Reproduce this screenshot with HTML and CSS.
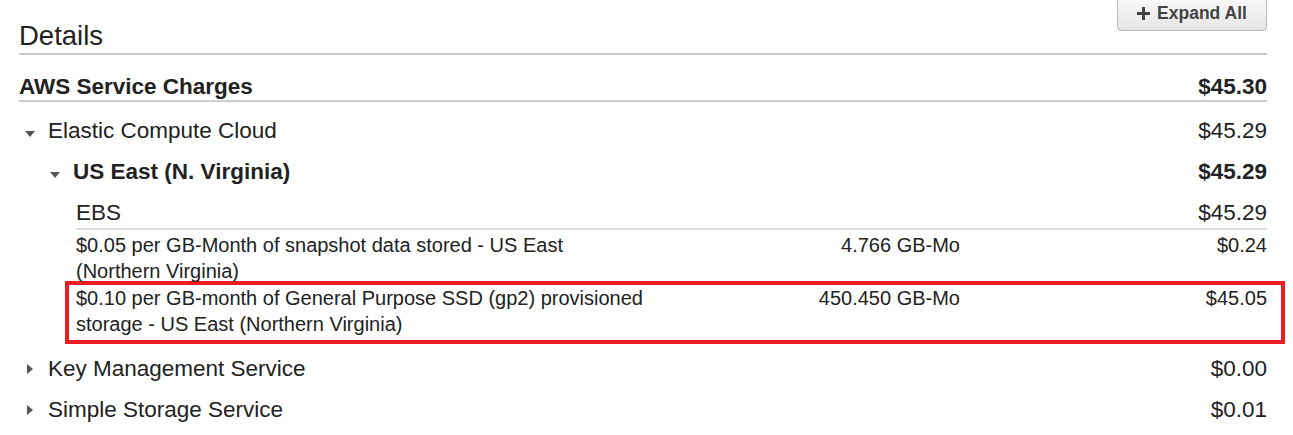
FILE: index.html
```html
<!DOCTYPE html>
<html>
<head>
<meta charset="utf-8">
<link rel="stylesheet" href="styles.css">
</head>
<body>
<div class="page">
  <div class="header">
    <h2 class="title">Details</h2>
    <button class="btn">
      <svg class="plus" width="13" height="13" viewBox="0 0 13 13"><path d="M5 0h3v5h5v3H8v5H5V8H0V5h5z" fill="#444"/></svg>
      <span>Expand All</span>
    </button>
  </div>
  <div class="section-head">
    <span>AWS Service Charges</span>
    <span>$45.30</span>
  </div>
  <div class="group">
    <div class="row lvl1">
      <span class="slot"><span class="caret down"></span></span>
      <span class="name">Elastic Compute Cloud</span>
      <span class="amt">$45.29</span>
    </div>
    <div class="row lvl2 bold">
      <span class="slot"><span class="caret down"></span></span>
      <span class="name">US East (N. Virginia)</span>
      <span class="amt">$45.29</span>
    </div>
    <div class="row lvl3 ebs">
      <span class="name">EBS</span>
      <span class="amt">$45.29</span>
    </div>
    <div class="item">
      <div class="desc">$0.05 per GB-Month of snapshot data stored - US East (Northern Virginia)</div>
      <div class="qty">4.766 GB-Mo</div>
      <div class="iamt">$0.24</div>
    </div>
    <div class="item highlight">
      <div class="desc">$0.10 per GB-month of General Purpose SSD (gp2) provisioned storage - US East (Northern Virginia)</div>
      <div class="qty">450.450 GB-Mo</div>
      <div class="iamt">$45.05</div>
    </div>
    <div class="row lvl1 after-box">
      <span class="slot"><span class="caret right"></span></span>
      <span class="name">Key Management Service</span>
      <span class="amt">$0.00</span>
    </div>
    <div class="row lvl1">
      <span class="slot"><span class="caret right"></span></span>
      <span class="name">Simple Storage Service</span>
      <span class="amt">$0.01</span>
    </div>
  </div>
</div>
</body>
</html>
```

FILE: styles.css
```css
html, body {
  margin: 0;
  padding: 0;
  background: #fff;
}
body {
  font-family: "Liberation Sans", Arial, sans-serif;
  color: #222;
}
.page {
  padding: 0 26px 0 19px;
}
.header {
  display: flex;
  justify-content: space-between;
  align-items: flex-start;
  border-bottom: 2px solid #ccc;
}
.title {
  margin: 20px 0 0 0;
  padding-bottom: 1px;
  font-size: 27.5px;
  line-height: 32px;
  font-weight: normal;
  color: #222;
}
.btn {
  margin-top: -4px;
  width: 150px;
  height: 35px;
  padding: 0;
  display: flex;
  align-items: center;
  justify-content: center;
  gap: 7px;
  border: 1px solid #b8b8b8;
  border-radius: 4px;
  background: linear-gradient(#fbfbfb, #e4e4e4);
  font-family: "Liberation Sans", Arial, sans-serif;
  font-weight: bold;
  font-size: 17.5px;
  color: #444;
}
.plus {
  display: block;
}
.section-head {
  display: flex;
  justify-content: space-between;
  padding: 19px 0 0 0;
  line-height: 26px;
  font-size: 22.5px;
  font-weight: bold;
  border-bottom: 2px solid #ccc;
}
.group {
  margin-top: 9px;
}
.row {
  display: flex;
  align-items: center;
  padding: 7px 0 8px 0;
  font-size: 22.5px;
  line-height: 26px;
}
.row .amt {
  margin-left: auto;
}
.bold {
  font-weight: bold;
}
.slot {
  width: 29px;
  flex: none;
  display: flex;
  align-items: center;
}
.lvl2 {
  padding-left: 25px;
}
.ebs {
  padding-bottom: 2px;
  border-bottom: 2px solid #ddd;
  margin-left: 57px;
}
.caret {
  display: block;
  width: 0;
  height: 0;
}
.caret.down {
  margin-left: 6px;
  margin-top: 6px;
  border-left: 5.5px solid transparent;
  border-right: 5.5px solid transparent;
  border-top: 6px solid #555;
}
.caret.right {
  margin-left: 8px;
  border-top: 5.5px solid transparent;
  border-bottom: 5.5px solid transparent;
  border-left: 6px solid #555;
}
.item {
  display: grid;
  grid-template-columns: 572px 1fr 307px;
  padding: 2px 0 0 57px;
  font-size: 20px;
  line-height: 26px;
}
.qty, .iamt {
  text-align: right;
}
.highlight {
  margin: -3px -18px 0 46px;
  padding: 0 14px 3px 7px;
  border: 4px solid #ec1c24;
}
.after-box {
  margin-top: 5px;
}
```
